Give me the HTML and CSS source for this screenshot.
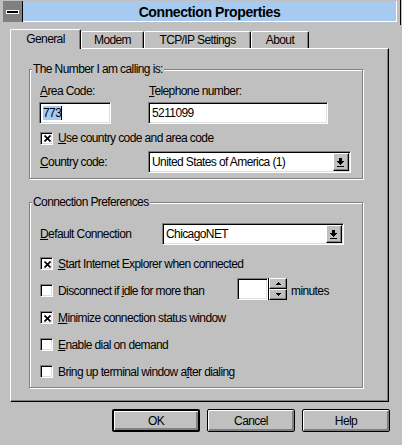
FILE: index.html
```html
<!DOCTYPE html>
<html>
<head>
<meta charset="utf-8">
<title>Connection Properties</title>
<link rel="stylesheet" href="styles.css">
</head>
<body>
<div class="window">
  <div class="titlebar">
    <div class="sysmenu"><span class="dash"></span></div>
    <div class="caption">Connection Properties</div>
    <div class="frame-edge"></div>
  </div>

  <div class="tabs">
    <div class="tab tab-active tab-general">General</div>
    <div class="tab tab-modem">Modem</div>
    <div class="tab tab-tcp">TCP/IP Settings</div>
    <div class="tab tab-about">About</div>
  </div>

  <div class="panel">
    <div class="group group-number">
      <div class="group-title">The Number I am calling is:</div>
      <div class="num-labels">
        <span class="lbl-area"><u>A</u>rea Code:</span>
        <span class="lbl-tel"><u>T</u>elephone number:</span>
      </div>
      <div class="num-inputs">
        <div class="field field-area"><span class="sel">773</span></div>
        <div class="field field-tel">5211099</div>
      </div>
      <div class="check-row">
        <span class="checkbox"><svg width="7" height="7" viewBox="0 0 7 7"><path d="M0.5 0.5L6.5 6.5M6.5 0.5L0.5 6.5" stroke="#000" stroke-width="1.7" fill="none"/></svg></span>
        <span class="check-label"><u>U</u>se country code and area code</span>
      </div>
      <div class="country-row">
        <span class="lbl-country"><u>C</u>ountry code:</span>
        <div class="combo combo-country">
          <span class="combo-text">United States of America (1)</span>
          <span class="combo-btn"><svg width="7" height="9" viewBox="0 0 7 9"><path d="M2 0h3v3h2v1h-1v1h-1v1h-1v1h-1v-1h-1v-1h-1v-1h-1v-1h2z" fill="#000"/><rect x="0" y="8" width="7" height="1" fill="#000"/></svg></span>
        </div>
      </div>
    </div>

    <div class="group group-prefs">
      <div class="group-title">Connection Preferences</div>
      <div class="default-row">
        <span class="lbl-default"><u>D</u>efault Connection</span>
        <div class="combo combo-default">
          <span class="combo-text">ChicagoNET</span>
          <span class="combo-btn"><svg width="7" height="9" viewBox="0 0 7 9"><path d="M2 0h3v3h2v1h-1v1h-1v1h-1v1h-1v-1h-1v-1h-1v-1h-1v-1h2z" fill="#000"/><rect x="0" y="8" width="7" height="1" fill="#000"/></svg></span>
        </div>
      </div>
      <div class="pref-list">
        <div class="pref-row">
          <span class="checkbox"><svg width="7" height="7" viewBox="0 0 7 7"><path d="M0.5 0.5L6.5 6.5M6.5 0.5L0.5 6.5" stroke="#000" stroke-width="1.7" fill="none"/></svg></span>
          <span class="check-label"><u>S</u>tart Internet Explorer when connected</span>
        </div>
        <div class="pref-row">
          <span class="checkbox"></span>
          <span class="check-label idle-label">Disconnect if <u>i</u>dle for more than</span>
          <div class="field spin-field"></div>
          <div class="spin-btns">
            <span class="spin-btn"><svg width="5" height="3" viewBox="0 0 5 3"><path d="M2 0h1v1h1v1h1v1h-5v-1h1v-1h1z" fill="#000"/></svg></span>
            <span class="spin-btn"><svg width="5" height="3" viewBox="0 0 5 3"><path d="M0 0h5v1h-1v1h-1v1h-1v-1h-1v-1h-1z" fill="#000"/></svg></span>
          </div>
          <span class="minutes">minutes</span>
        </div>
        <div class="pref-row">
          <span class="checkbox"><svg width="7" height="7" viewBox="0 0 7 7"><path d="M0.5 0.5L6.5 6.5M6.5 0.5L0.5 6.5" stroke="#000" stroke-width="1.7" fill="none"/></svg></span>
          <span class="check-label"><u>M</u>inimize connection status window</span>
        </div>
        <div class="pref-row">
          <span class="checkbox"></span>
          <span class="check-label"><u>E</u>nable dial on demand</span>
        </div>
        <div class="pref-row">
          <span class="checkbox"></span>
          <span class="check-label">Bring up terminal window a<u>f</u>ter dialing</span>
        </div>
      </div>
    </div>
  </div>

  <div class="buttons">
    <div class="btn btn-default">OK</div>
    <div class="btn">Cancel</div>
    <div class="btn">Help</div>
  </div>
</div>
</body>
</html>
```

FILE: styles.css
```css
body {
  margin: 0;
  background: #c0c0c0;
  font-family: "Liberation Sans", Arial, sans-serif;
  font-size: 12px;
  line-height: 14px;
  color: #000;
}

.window {
  width: 402px;
  height: 445px;
  overflow: hidden;
  letter-spacing: -0.6px;
}

u {
  text-decoration: underline;
  text-underline-offset: 1px;
}

/* ---------- title bar ---------- */
.titlebar {
  display: flex;
  align-items: flex-start;
  height: 25px;
}

.sysmenu {
  width: 19px;
  height: 21px;
  margin: 1px 0 0 3px;
  background: #808080;
  border-right: 1px solid #000;
  display: flex;
  align-items: center;
  justify-content: center;
}

.dash {
  display: block;
  width: 11px;
  height: 2px;
  background: #000;
  border: 1px solid #fff;
}

.caption {
  flex: 1;
  height: 17px;
  padding-top: 3px;
  margin-top: 1px;
  background: #a6caf0;
  border-right: 1px solid #fff;
  border-bottom: 1px solid #fff;
  font-weight: bold;
  font-size: 14px;
  letter-spacing: -0.4px;
  line-height: 17px;
  text-align: center;
}

.frame-edge {
  width: 1px;
  height: 25px;
  background: #000;
  margin: 0 1px 0 3px;
}

/* ---------- tabs ---------- */
.tabs {
  display: flex;
  align-items: flex-end;
  height: 19px;
  margin: 4px 0 0 10px;
}

.tab {
  box-sizing: border-box;
  height: 17px;
  padding-top: 1px;
  border-top: 1px solid #fff;
  border-left: 1px solid #fff;
  border-right: 1px solid #000;
  box-shadow: inset -1px 0 0 #808080;
  border-radius: 2px 2px 0 0;
  text-align: center;
  line-height: 14px;
  background: #c0c0c0;
}

.tab-active {
  height: 20px;
  margin-bottom: -1px;
  padding-top: 2px;
  position: relative;
  z-index: 1;
}

.tab-general { width: 71px; }
.tab-modem { width: 63px; }
.tab-tcp { width: 107px; }
.tab-about { width: 58px; }

/* ---------- panel ---------- */
.panel {
  box-sizing: border-box;
  width: 379px;
  height: 354px;
  margin-left: 10px;
  border: 1px solid;
  border-color: #fff #000 #000 #fff;
  box-shadow: inset -1px -1px 0 #808080;
  padding: 20px 0 0 18px;
}

.group {
  box-sizing: border-box;
  width: 334px;
  border: 1px solid #808080;
  box-shadow: 1px 1px 0 #fff, inset 1px 1px 0 #fff;
  padding: 0 0 0 10px;
}

.group-number { padding-bottom: 5px; }
.group-prefs { margin-top: 23px; }

.group-title {
  width: max-content;
  margin: -8px 0 0 -8px;
  padding: 0 1px;
  background: #c0c0c0;
  line-height: 14px;
}

/* ---------- fields ---------- */
.field {
  box-sizing: border-box;
  height: 22px;
  border: 1px solid;
  border-color: #808080 #fff #fff #808080;
  box-shadow: inset 1px 1px 0 #000, inset -1px -1px 0 #dfdfdf;
  background: #fff;
  padding: 0 3px;
  line-height: 20px;
  white-space: nowrap;
}

.sel {
  background: #a6caf0;
  border-right: 1px solid #000;
}

.num-labels {
  display: flex;
  margin-top: 8px;
}

.lbl-area { width: 109px; }

.num-inputs {
  display: flex;
  margin-top: 4px;
  margin-left: -1px;
}

.field-area { width: 72px; }
.field-tel { width: 180px; margin-left: 37px; }

/* ---------- checkbox ---------- */
.checkbox {
  box-sizing: border-box;
  flex: none;
  width: 13px;
  height: 13px;
  border: 1px solid;
  border-color: #808080 #fff #fff #808080;
  box-shadow: inset 1px 1px 0 #000, inset -1px -1px 0 #dfdfdf;
  background: #fff;
  display: flex;
  align-items: center;
  justify-content: center;
}

.checkbox svg { display: block; margin: 1px 0 0 1px; }

.check-label { margin-left: 5px; white-space: nowrap; }

.check-row {
  display: flex;
  align-items: center;
  height: 14px;
  margin-top: 7px;
}

/* ---------- combo ---------- */
.combo {
  box-sizing: border-box;
  height: 22px;
  border: 1px solid;
  border-color: #808080 #fff #fff #808080;
  box-shadow: inset 1px 1px 0 #000, inset -1px -1px 0 #dfdfdf;
  background: #fff;
  padding: 1px;
  display: flex;
}

.combo-text {
  flex: 1;
  padding-left: 2px;
  line-height: 18px;
  white-space: nowrap;
}

.combo-btn {
  box-sizing: border-box;
  width: 16px;
  height: 18px;
  border: 1px solid;
  border-color: #fff #000 #000 #fff;
  box-shadow: inset -1px -1px 0 #808080;
  background: #c0c0c0;
  display: flex;
  align-items: center;
  justify-content: center;
}

.combo-btn svg { display: block; margin-left: -1px; }

.country-row {
  display: flex;
  align-items: center;
  height: 22px;
  margin-top: 6px;
}

.lbl-country { width: 108px; }
.combo-country { width: 203px; }

.default-row {
  display: flex;
  align-items: center;
  height: 22px;
  margin-top: 14px;
}

.lbl-default { width: 122px; }
.combo-default { width: 182px; }

/* ---------- preference rows ---------- */
.pref-list {
  margin-top: 5px;
  padding-bottom: 2px;
}

.pref-row {
  display: flex;
  align-items: center;
  height: 27px;
}

.idle-label { width: 179px; }

.spin-field { width: 31px; margin-top: -4px; }

.spin-btns {
  box-sizing: border-box;
  width: 19px;
  height: 22px;
  margin-top: -4px;
  display: flex;
  flex-direction: column;
  border-left: 1px solid #000;
}

.spin-btn {
  box-sizing: border-box;
  flex: 1;
  border: 1px solid;
  border-color: #fff #000 #000 #fff;
  box-shadow: inset -1px -1px 0 #808080;
  background: #c0c0c0;
  display: flex;
  align-items: center;
  justify-content: center;
}

.spin-btn svg { display: block; }

.minutes { margin-left: 4px; }

/* ---------- buttons ---------- */
.buttons {
  display: flex;
  justify-content: flex-end;
  gap: 7px;
  margin-top: 7px;
  padding-right: 12px;
}

.btn {
  box-sizing: border-box;
  width: 88px;
  height: 23px;
  border: 1px solid #000;
  border-radius: 2px;
  box-shadow: inset 1px 1px 0 #fff, inset -2px -2px 0 #808080;
  background: #c0c0c0;
  display: flex;
  align-items: center;
  justify-content: center;
}

.btn-default {
  border-width: 2px;
}
```
